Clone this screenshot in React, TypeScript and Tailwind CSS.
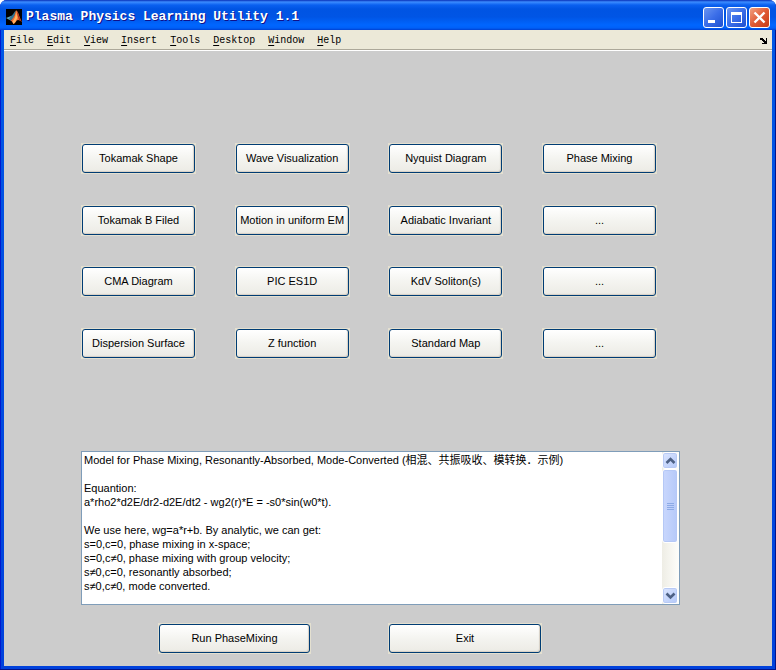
import React from "react";

const menus = ["File", "Edit", "View", "Insert", "Tools", "Desktop", "Window", "Help"];

const tools = [
  "Tokamak Shape", "Wave Visualization", "Nyquist Diagram", "Phase Mixing",
  "Tokamak B Filed", "Motion in uniform EM", "Adiabatic Invariant", "...",
  "CMA Diagram", "PIC ES1D", "KdV Soliton(s)", "...",
  "Dispersion Surface", "Z function", "Standard Map", "...",
];

const description = `Model for Phase Mixing, Resonantly-Absorbed, Mode-Converted (相混、共振吸收、模转换．示例)

Equantion:
a*rho2*d2E/dr2-d2E/dt2 - wg2(r)*E = -s0*sin(w0*t).

We use here, wg=a*r+b. By analytic, we can get:
s=0,c=0, phase mixing in x-space;
s=0,c≠0, phase mixing with group velocity;
s≠0,c=0, resonantly absorbed;
s≠0,c≠0, mode converted.`;

function PushButton({ label }: { label: string }) {
  return (
    <div className="w-full bg-[#e4e0d0] p-px">
      <button
        type="button"
        className="block h-[29px] w-full rounded-[3px] border border-[#003c74] bg-linear-to-b from-white via-[#f4f4f0] to-[#ecebe5] pb-px text-[11px] leading-[14px] whitespace-nowrap text-black shadow-[inset_-1px_-1px_1px_#d6d0c5]"
      >
        {label}
      </button>
    </div>
  );
}

function MatlabIcon() {
  return (
    <svg className="size-4 shrink-0" viewBox="0 0 16 16" aria-hidden="true">
      <rect width="16" height="16" fill="#000" />
      <path d="M0 9L5 7L7 8L4.500 11.500Z" fill="#5fa3b8" />
      <path d="M5 7C7 6 8 3 10 1.500L8 9L4.500 11.500L3 10Z" fill="#2f7390" />
      <path d="M10 1.500C9 5 8 9.500 4.500 11.500C6 12 6.500 14 7.500 15C10 14 10 11 12 11C14 11 15 12 16 13C13.500 9 12 1 10 1.500Z" fill="#ee6a30" />
      <path d="M10 1.500C10 6 9 10 6.500 12.500L7.500 15C10 13 10 11 11.500 9Z" fill="#ffb460" />
      <path d="M10.500 2C12.500 4 13 9 16 13L13 11Z" fill="#a82c18" />
    </svg>
  );
}

function CaptionButton({ kind }: { kind: "Minimize" | "Maximize" | "Close" }) {
  const tone =
    kind === "Close"
      ? "bg-linear-to-br from-[#f0a080] via-[#e05a35] to-[#c83c14]"
      : "bg-linear-to-br from-[#6a94f0] via-[#3a6de8] to-[#1e50d0]";
  return (
    <button type="button" aria-label={kind} className={`size-[21px] rounded-[3px] border border-white ${tone}`}>
      <svg className="size-[19px]" viewBox="0 0 19 19" aria-hidden="true">
        {kind === "Minimize" && <path d="M4 12h7v3H4z" fill="#fff" />}
        {kind === "Maximize" && <path d="M4 4h11v11H4zM5 7v7h9V7z" fill="#fff" fillRule="evenodd" />}
        {kind === "Close" && <path d="M4.500 4.500L14.500 14.500M14.500 4.500L4.500 14.500" stroke="#fff" strokeWidth="2.400" />}
      </svg>
    </button>
  );
}

function ScrollArrow({ up }: { up?: boolean }) {
  return (
    <button
      type="button"
      aria-label={up ? "Scroll up" : "Scroll down"}
      className="h-[17px] w-full shrink-0 rounded-[3px] border border-white bg-linear-to-br from-[#dce6ff] to-[#b3c8f8] shadow-[inset_0_0_0_1px_#b8caf5]"
    >
      <svg className="mx-auto block" width="13" height="15" viewBox="0 0 13 15" aria-hidden="true">
        <path d={up ? "M2.500 10L6.500 6L10.500 10" : "M2.500 5.500L6.500 9.500L10.500 5.500"} fill="none" stroke="#4d6185" strokeWidth="2.600" />
      </svg>
    </button>
  );
}

export default function App() {
  return (
    <div className="flex min-h-screen flex-col rounded-t-[7px] bg-linear-to-b from-[#0058e6] to-[#0041dc] font-['Liberation_Sans','Noto_Sans_CJK_SC',sans-serif] shadow-[inset_-1px_-1px_0_#00138c,inset_1px_0_0_#0019cf]">
      <header className="flex h-[30px] shrink-0 items-center rounded-t-[7px] bg-[linear-gradient(to_bottom,#0830b8_0,#3c8cff_2px,#0a60f0_5px,#0054e3_9px,#0055e5_17px,#0066ff_25px,#0060f8_28px,#0040d0_30px)] pt-1 pr-1.5 pl-1.5">
        <MatlabIcon />
        <h1 className="ml-1 flex-1 font-['Liberation_Mono',monospace] text-[13px] leading-4 font-bold whitespace-nowrap text-white [text-shadow:1px_1px_#0f1089]">
          Plasma Physics Learning Utility 1.1
        </h1>
        <div className="flex gap-0.5">
          <CaptionButton kind="Minimize" />
          <CaptionButton kind="Maximize" />
          <CaptionButton kind="Close" />
        </div>
      </header>

      <div className="mx-1 mb-1 flex flex-1 flex-col bg-[#cccccc]">
        <nav className="flex h-[21px] items-center gap-[13px] border-b border-white bg-[#ece9d8] pt-0.5 pr-1 pl-1.5 font-['Liberation_Mono',monospace] text-[10px] leading-3 text-black shadow-[inset_0_-1px_0_#aca899]">
          {menus.map((m) => (
            <button key={m} type="button">
              <span className="underline underline-offset-2">{m[0]}</span>
              {m.slice(1)}
            </button>
          ))}
          <button type="button" aria-label="Dock figure" className="ml-auto">
            <svg width="8" height="8" viewBox="0 0 8 8" aria-hidden="true">
              <path d="M0 1h3v1h1v1h1v1h1V1h1v6H2V6h2V5H3V4H2V3H0z" fill="#000" />
            </svg>
          </button>
        </nav>

        <main className="flex-1 pt-[92px] pr-[92px] pb-3 pl-[77px]">
          <div className="mr-[23px] grid h-[216px] grid-cols-[repeat(4,115px)] content-between justify-between">
            {tools.map((t, i) => (
              <PushButton key={i} label={t} />
            ))}
          </div>

          <div className="mt-[92px] flex h-[154px] border border-[#7f9db9] bg-white">
            <textarea
              readOnly
              aria-label="Model description"
              value={description}
              className="min-w-0 flex-1 resize-none overflow-hidden bg-white py-px pl-0.5 text-[11px] leading-[14px] text-black outline-none"
            />
            <div className="flex w-[17px] flex-col bg-linear-to-r from-[#eeede5] to-[#fefefb] pr-px">
              <ScrollArrow up />
              <div className="flex h-[74px] flex-col items-center justify-center gap-px rounded-[3px] border border-white bg-linear-to-r from-[#c9d7fd] to-[#b5c9f9] shadow-[inset_0_0_0_1px_#b5c8f6]">
                <i className="h-px w-[7px] bg-[#8caae6]" />
                <i className="h-px w-[7px] bg-[#8caae6]" />
                <i className="h-px w-[7px] bg-[#8caae6]" />
                <i className="h-px w-[7px] bg-[#8caae6]" />
              </div>
              <div className="flex-1" />
              <ScrollArrow />
            </div>
          </div>

          <div className="mt-[18px] grid grid-cols-[153px_154px] gap-[77px] pl-[77px]">
            <PushButton label="Run PhaseMixing" />
            <PushButton label="Exit" />
          </div>
        </main>
      </div>
    </div>
  );
}
